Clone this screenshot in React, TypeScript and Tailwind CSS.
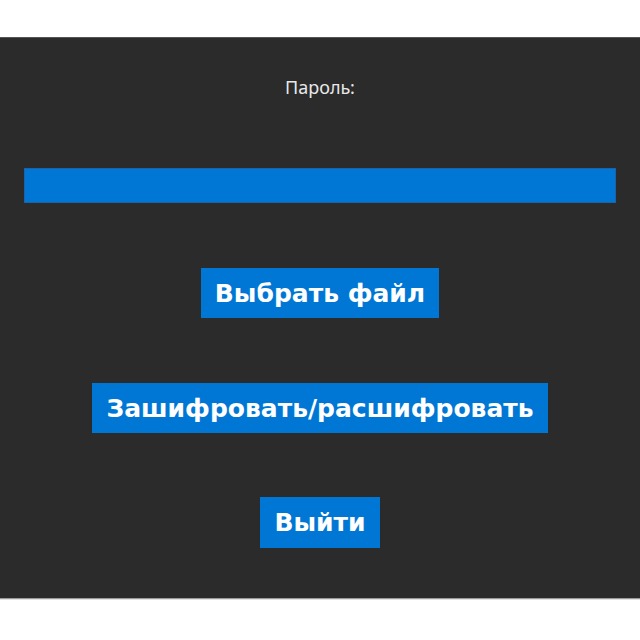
export default function App() {
  const btn =
    "bg-[#0077d4] px-[14px] h-[50px] text-white font-bold text-[25px] leading-none flex items-center font-['DejaVu_Sans',sans-serif]";
  return (
    <div className="h-[640px] w-[640px] bg-white flex flex-col font-['Noto_Sans',sans-serif]">
      <div className="h-[37px]" />
      <div className="h-[562px] bg-[#2b2b2b] border-t border-t-[#555555] border-b border-b-[#9a9a9a] flex flex-col items-center">
        <div className="mt-[38px] h-[22px] leading-[22px] text-[18px] text-[#e8e8e8]">Пароль:</div>
        <div className="mt-[70px] h-[35px] w-[592px] bg-[#0077d4] border border-[#1b62a8]" />
        <button className={`mt-[65px] ${btn}`}>Выбрать файл</button>
        <button className={`mt-[65px] ${btn}`}>Зашифровать/расшифровать</button>
        <button className={`mt-[64px] ${btn} h-[51px]`}>Выйти</button>
      </div>
      <div className="h-[1px] bg-[#e3e3e3]" />
    </div>
  );
}
